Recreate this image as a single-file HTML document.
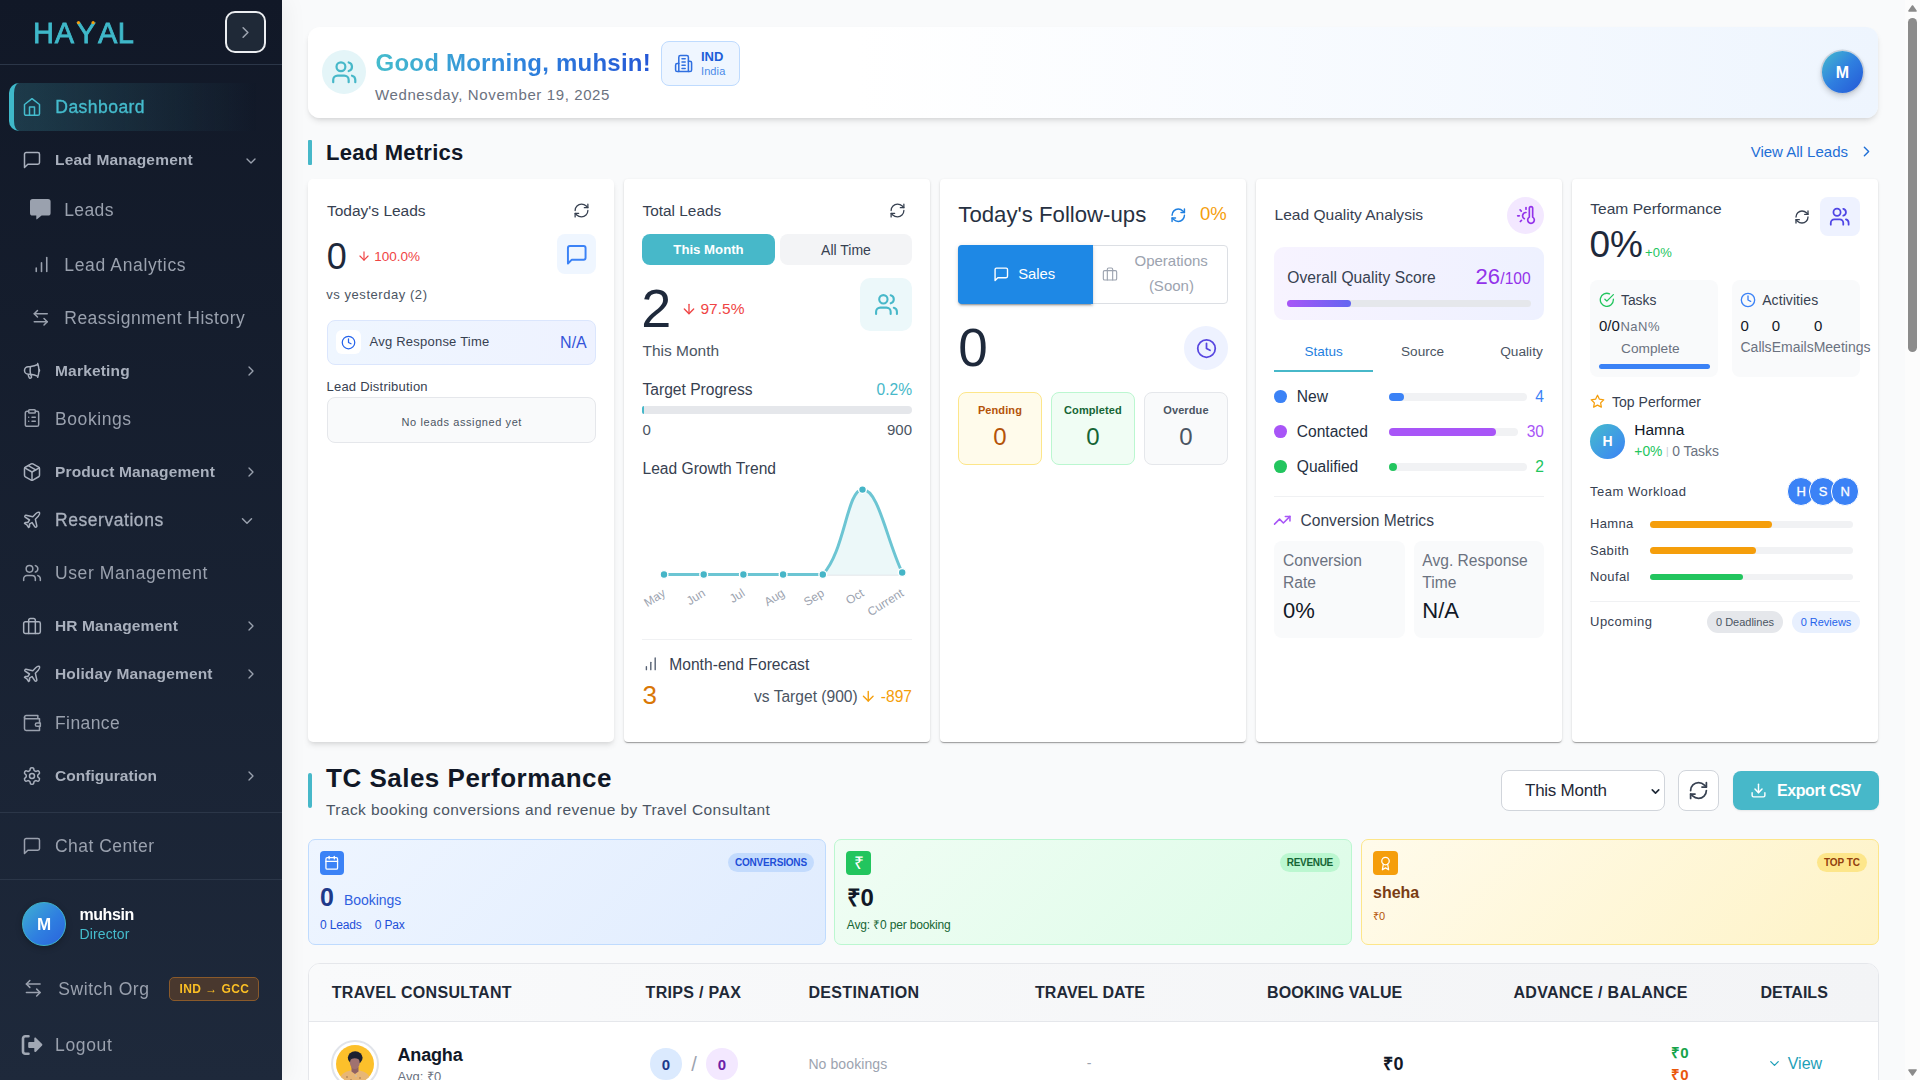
<!DOCTYPE html>
<html lang="en"><head><meta charset="utf-8"><title>Hayal Dashboard</title>
<style>
*{box-sizing:border-box;margin:0;padding:0}
button{border:0;background:none;font:inherit;cursor:pointer}
h1,h2{font-weight:700}
html,body{width:1920px;height:1080px;overflow:hidden;background:#f9fafb}
body{font-family:"Liberation Sans",sans-serif;-webkit-font-smoothing:antialiased}
#app{position:relative;width:1920px;height:1080px;overflow:hidden;background:#f9fafb}
.a{position:absolute;display:block}
.t{position:absolute;line-height:1;white-space:pre}
.card{position:absolute;background:#fff;border-radius:4px;box-shadow:0 2px 1px -1px rgba(0,0,0,.2),0 1px 1px 0 rgba(0,0,0,.14),0 1px 3px 0 rgba(0,0,0,.12)}
</style></head>
<body><div id="app">
<div class="a" style="left:0;top:0;width:282px;height:1080px;background:linear-gradient(180deg,#111827 0%,#1e293b 100%);box-shadow:4px 0 22px rgba(0,0,0,.055)"></div><aside class="a" style="left:0;top:0;width:282px;height:1080px;overflow:hidden;will-change:transform">
<div class="a" style="left:0px;top:0px;width:282px;height:65px;border-bottom:1px solid #2b3648"></div>
<svg class="a" style="left:30px;top:14px" width="110" height="36" viewBox="0 0 110 36"><text x="3.100 24.700 46.400 68 87.800" y="28.500" font-family="Liberation Sans, sans-serif" font-size="29" fill="#3fb8c9" stroke="#3fb8c9" stroke-width="0.800">HAYAL</text><circle cx="48.500" cy="8.600" r="1.600" fill="#f59e0b"/><circle cx="63.100" cy="8.600" r="1.600" fill="#f59e0b"/></svg>
<button class="a" style="left:225px;top:11px;width:41px;height:41.7px;border:2px solid #eceef1;border-radius:10px;background:#1f2937"></button>
<svg class="a" style="left:235.5px;top:22.5px;" width="19" height="19" viewBox="0 0 24 24" fill="none" stroke="#9ca3af" stroke-width="2" stroke-linecap="round" stroke-linejoin="round"><path d="m9 18 6-6-6-6"/></svg>
<div class="a" style="left:9px;top:83px;width:262px;height:48px;border-radius:10px;background:linear-gradient(90deg,rgba(71,184,201,.21),rgba(71,184,201,0) 95%);border-left:5px solid #3fb8c9"></div>
<svg class="a" style="left:21.5px;top:96.5px;" width="20" height="20" viewBox="0 0 24 24" fill="none" stroke="#45bccd" stroke-width="1.8" stroke-linecap="round" stroke-linejoin="round"><path d="m3 9 9-7 9 7v11a2 2 0 0 1-2 2H5a2 2 0 0 1-2-2z"/><polyline points="9 22 9 12 15 12 15 22"/></svg>
<div class="t" style="left:55.3px;top:99px;font-size:17.5px;color:#45bccd;font-weight:500;letter-spacing:0.46px;-webkit-text-stroke:0.35px #45bccd;">Dashboard</div>
<svg class="a" style="left:21.8px;top:150px;" width="20" height="20" viewBox="0 0 24 24" fill="none" stroke="#a9b0bd" stroke-width="1.8" stroke-linecap="round" stroke-linejoin="round"><path d="M21 15a2 2 0 0 1-2 2H7l-4 4V5a2 2 0 0 1 2-2h14a2 2 0 0 1 2 2z"/></svg>
<div class="t" style="left:55px;top:152px;font-size:15.5px;color:#a9b0bd;font-weight:700;letter-spacing:0.18px;">Lead Management</div>
<svg class="a" style="left:243px;top:152.5px;" width="16" height="16" viewBox="0 0 24 24" fill="none" stroke="#9aa1ae" stroke-width="2" stroke-linecap="round" stroke-linejoin="round"><path d="m6 9 6 6 6-6"/></svg>
<svg class="a" style="left:30.400px;top:199.200px" width="21" height="21" viewBox="0 0 21 21"><path d="M2.600 0h15.400a2.600 2.600 0 0 1 2.600 2.600v11.400a2.600 2.600 0 0 1-2.600 2.600h-6.400l-4.600 3.700c-.4.300-.7.100-.7-.3V16.600H2.600a2.600 2.600 0 0 1-2.600-2.600V2.600a2.600 2.600 0 0 1 2.600-2.600z" fill="#9aa1ae"/></svg>
<div class="t" style="left:64.25px;top:202px;font-size:17.5px;color:#9aa1ae;letter-spacing:0.37px;">Leads</div>
<svg class="a" style="left:30.5px;top:254px;" width="21" height="21" viewBox="0 0 24 24" fill="none" stroke="#9aa1ae" stroke-width="1.8" stroke-linecap="round" stroke-linejoin="round"><line x1="12" x2="12" y1="20" y2="10"/><line x1="18" x2="18" y1="20" y2="4"/><line x1="6" x2="6" y1="20" y2="16"/></svg>
<div class="t" style="left:64.25px;top:257px;font-size:17.5px;color:#9aa1ae;letter-spacing:0.65px;">Lead Analytics</div>
<svg class="a" style="left:31.25px;top:307.75px;" width="19.5" height="19.5" viewBox="0 0 24 24" fill="none" stroke="#9aa1ae" stroke-width="1.8" stroke-linecap="round" stroke-linejoin="round"><path d="M8 3 4 7l4 4"/><path d="M4 7h16"/><path d="m16 21 4-4-4-4"/><path d="M20 17H4"/></svg>
<div class="t" style="left:64.25px;top:310px;font-size:17.5px;color:#9aa1ae;letter-spacing:0.49px;">Reassignment History</div>
<svg class="a" style="left:21.8px;top:361px;" width="20" height="20" viewBox="0 0 24 24" fill="none" stroke="#a9b0bd" stroke-width="1.8" stroke-linecap="round" stroke-linejoin="round"><path d="M10.34 15.84c-.688-.06-1.386-.09-2.09-.09H7.5a4.5 4.5 0 1 1 0-9h.75c.704 0 1.402-.03 2.09-.09m0 9.18c.253.962.584 1.892.985 2.783.247.55.06 1.21-.463 1.511l-.657.38c-.551.318-1.26.117-1.527-.461a20.845 20.845 0 0 1-1.44-4.282m3.102.069a18.03 18.03 0 0 1-.59-4.59c0-1.586.205-3.124.59-4.59m0 9.18a23.848 23.848 0 0 1 8.835 2.535M10.34 6.66a23.847 23.847 0 0 0 8.835-2.535m0 0A23.74 23.74 0 0 0 18.795 3m.38 1.125a23.91 23.91 0 0 1 1.014 5.395m-1.014 8.855c-.118.38-.245.754-.38 1.125m.38-1.125a23.91 23.91 0 0 0 1.014-5.395m0-3.46c.495.413.811 1.035.811 1.73 0 .695-.316 1.317-.811 1.73m0-3.46a24.347 24.347 0 0 1 0 3.46"/></svg>
<div class="t" style="left:55px;top:363px;font-size:15.5px;color:#a9b0bd;font-weight:700;letter-spacing:0.19px;">Marketing</div>
<svg class="a" style="left:242.6px;top:363px;" width="16" height="16" viewBox="0 0 24 24" fill="none" stroke="#9aa1ae" stroke-width="2" stroke-linecap="round" stroke-linejoin="round"><path d="m9 18 6-6-6-6"/></svg>
<svg class="a" style="left:21.8px;top:408.2px;" width="20" height="20" viewBox="0 0 24 24" fill="none" stroke="#9aa1ae" stroke-width="1.8" stroke-linecap="round" stroke-linejoin="round"><rect width="8" height="4" x="8" y="2" rx="1" ry="1"/><path d="M16 4h2a2 2 0 0 1 2 2v14a2 2 0 0 1-2 2H6a2 2 0 0 1-2-2V6a2 2 0 0 1 2-2h2"/><path d="M12 11h4"/><path d="M12 16h4"/><path d="M8 11h.01"/><path d="M8 16h.01"/></svg>
<div class="t" style="left:55px;top:411px;font-size:17.5px;color:#9aa1ae;letter-spacing:0.59px;">Bookings</div>
<svg class="a" style="left:21.8px;top:461.6px;" width="20" height="20" viewBox="0 0 24 24" fill="none" stroke="#a9b0bd" stroke-width="1.8" stroke-linecap="round" stroke-linejoin="round"><path d="m7.5 4.27 9 5.15"/><path d="M21 8a2 2 0 0 0-1-1.73l-7-4a2 2 0 0 0-2 0l-7 4A2 2 0 0 0 3 8v8a2 2 0 0 0 1 1.73l7 4a2 2 0 0 0 2 0l7-4A2 2 0 0 0 21 16Z"/><path d="m3.3 7 8.7 5 8.7-5"/><path d="M12 22V12"/></svg>
<div class="t" style="left:55px;top:464px;font-size:15.5px;color:#a9b0bd;font-weight:700;letter-spacing:0.13px;">Product Management</div>
<svg class="a" style="left:242.6px;top:463.6px;" width="16" height="16" viewBox="0 0 24 24" fill="none" stroke="#9aa1ae" stroke-width="2" stroke-linecap="round" stroke-linejoin="round"><path d="m9 18 6-6-6-6"/></svg>
<svg class="a" style="left:21.8px;top:510px;" width="20" height="20" viewBox="0 0 24 24" fill="none" stroke="#a9b0bd" stroke-width="1.8" stroke-linecap="round" stroke-linejoin="round"><path d="M17.8 19.2 16 11l3.5-3.5C21 6 21.5 4 21 3c-1-.5-3 0-4.5 1.5L13 8 4.8 6.2c-.5-.1-.9.1-1.1.5l-.3.5c-.2.5-.1 1 .3 1.3L9 12l-2 3H4l-1 1 3 2 2 3 1-1v-3l3-2 3.5 5.3c.3.4.8.5 1.3.3l.5-.2c.4-.3.6-.7.5-1.2z"/></svg>
<div class="t" style="left:55px;top:512px;font-size:17.5px;color:#a9b0bd;font-weight:500;letter-spacing:0.55px;-webkit-text-stroke:0.3px #a9b0bd;">Reservations</div>
<svg class="a" style="left:237.5px;top:511.5px;" width="18" height="18" viewBox="0 0 24 24" fill="none" stroke="#9aa1ae" stroke-width="2" stroke-linecap="round" stroke-linejoin="round"><path d="m6 9 6 6 6-6"/></svg>
<svg class="a" style="left:21.8px;top:562.5px;" width="20" height="20" viewBox="0 0 24 24" fill="none" stroke="#9aa1ae" stroke-width="1.8" stroke-linecap="round" stroke-linejoin="round"><path d="M16 21v-2a4 4 0 0 0-4-4H6a4 4 0 0 0-4 4v2"/><circle cx="9" cy="7" r="4"/><path d="M22 21v-2a4 4 0 0 0-3-3.87"/><path d="M16 3.13a4 4 0 0 1 0 7.75"/></svg>
<div class="t" style="left:55px;top:565px;font-size:17.5px;color:#9aa1ae;letter-spacing:0.6px;">User Management</div>
<svg class="a" style="left:21.8px;top:615.5px;" width="20" height="20" viewBox="0 0 24 24" fill="none" stroke="#a9b0bd" stroke-width="1.8" stroke-linecap="round" stroke-linejoin="round"><rect width="20" height="14" x="2" y="7" rx="2" ry="2"/><path d="M16 21V5a2 2 0 0 0-2-2h-4a2 2 0 0 0-2 2v16"/></svg>
<div class="t" style="left:55px;top:618px;font-size:15.5px;color:#a9b0bd;font-weight:700;letter-spacing:0.12px;">HR Management</div>
<svg class="a" style="left:242.6px;top:617.5px;" width="16" height="16" viewBox="0 0 24 24" fill="none" stroke="#9aa1ae" stroke-width="2" stroke-linecap="round" stroke-linejoin="round"><path d="m9 18 6-6-6-6"/></svg>
<svg class="a" style="left:21.8px;top:663.5px;" width="20" height="20" viewBox="0 0 24 24" fill="none" stroke="#a9b0bd" stroke-width="1.8" stroke-linecap="round" stroke-linejoin="round"><path d="M17.8 19.2 16 11l3.5-3.5C21 6 21.5 4 21 3c-1-.5-3 0-4.5 1.5L13 8 4.8 6.2c-.5-.1-.9.1-1.1.5l-.3.5c-.2.5-.1 1 .3 1.3L9 12l-2 3H4l-1 1 3 2 2 3 1-1v-3l3-2 3.5 5.3c.3.4.8.5 1.3.3l.5-.2c.4-.3.6-.7.5-1.2z"/></svg>
<div class="t" style="left:55px;top:666px;font-size:15.5px;color:#a9b0bd;font-weight:700;letter-spacing:0.14px;">Holiday Management</div>
<svg class="a" style="left:242.6px;top:665.5px;" width="16" height="16" viewBox="0 0 24 24" fill="none" stroke="#9aa1ae" stroke-width="2" stroke-linecap="round" stroke-linejoin="round"><path d="m9 18 6-6-6-6"/></svg>
<svg class="a" style="left:21.8px;top:712.5px;" width="20" height="20" viewBox="0 0 24 24" fill="none" stroke="#9aa1ae" stroke-width="1.8" stroke-linecap="round" stroke-linejoin="round"><path d="M21 12V7H5a2 2 0 0 1 0-4h14v4"/><path d="M3 5v14a2 2 0 0 0 2 2h16v-5"/><path d="M18 12a2 2 0 0 0 0 4h4v-4Z"/></svg>
<div class="t" style="left:55px;top:715px;font-size:17.5px;color:#9aa1ae;letter-spacing:0.4px;">Finance</div>
<svg class="a" style="left:21.8px;top:765.5px;" width="20" height="20" viewBox="0 0 24 24" fill="none" stroke="#a9b0bd" stroke-width="1.8" stroke-linecap="round" stroke-linejoin="round"><path d="M12.22 2h-.44a2 2 0 0 0-2 2v.18a2 2 0 0 1-1 1.73l-.43.25a2 2 0 0 1-2 0l-.15-.08a2 2 0 0 0-2.73.73l-.22.38a2 2 0 0 0 .73 2.73l.15.1a2 2 0 0 1 1 1.72v.51a2 2 0 0 1-1 1.74l-.15.09a2 2 0 0 0-.73 2.73l.22.38a2 2 0 0 0 2.73.73l.15-.08a2 2 0 0 1 2 0l.43.25a2 2 0 0 1 1 1.73V20a2 2 0 0 0 2 2h.44a2 2 0 0 0 2-2v-.18a2 2 0 0 1 1-1.73l.43-.25a2 2 0 0 1 2 0l.15.08a2 2 0 0 0 2.73-.73l.22-.39a2 2 0 0 0-.73-2.73l-.15-.08a2 2 0 0 1-1-1.74v-.5a2 2 0 0 1 1-1.74l.15-.09a2 2 0 0 0 .73-2.73l-.22-.38a2 2 0 0 0-2.73-.73l-.15.08a2 2 0 0 1-2 0l-.43-.25a2 2 0 0 1-1-1.73V4a2 2 0 0 0-2-2z"/><circle cx="12" cy="12" r="3"/></svg>
<div class="t" style="left:55px;top:768px;font-size:15.5px;color:#a9b0bd;font-weight:700;letter-spacing:0.03px;">Configuration</div>
<svg class="a" style="left:242.6px;top:767.5px;" width="16" height="16" viewBox="0 0 24 24" fill="none" stroke="#9aa1ae" stroke-width="2" stroke-linecap="round" stroke-linejoin="round"><path d="m9 18 6-6-6-6"/></svg>
<div class="a" style="left:0px;top:812px;width:282px;height:1px;background:#2b3648"></div>
<svg class="a" style="left:21.8px;top:835.7px;" width="20" height="20" viewBox="0 0 24 24" fill="none" stroke="#9aa1ae" stroke-width="1.8" stroke-linecap="round" stroke-linejoin="round"><path d="M21 15a2 2 0 0 1-2 2H7l-4 4V5a2 2 0 0 1 2-2h14a2 2 0 0 1 2 2z"/></svg>
<div class="t" style="left:55px;top:838px;font-size:17.5px;color:#9aa1ae;letter-spacing:0.46px;">Chat Center</div>
<div class="a" style="left:0px;top:879px;width:282px;height:1px;background:#2b3648"></div>
<div class="a" style="left:22px;top:902px;width:44px;height:44px;border-radius:50%;background:linear-gradient(135deg,#3fb0d2 0%,#2f7fe0 55%,#2a63dc 100%);border:1.500px solid #41b3c9;box-shadow:0 2px 6px rgba(0,0,0,.25)"></div>
<div class="t" style="left:44px;top:916px;font-size:17px;color:#fff;font-weight:700;transform:translateX(-50%);">M</div>
<div class="t" style="left:79.5px;top:907px;font-size:16px;color:#fff;font-weight:700;letter-spacing:-0.44px;">muhsin</div>
<div class="t" style="left:79.5px;top:927px;font-size:14px;color:#45bccd;letter-spacing:0.12px;">Director</div>
<svg class="a" style="left:23.45px;top:978.45px;" width="20.5" height="20.5" viewBox="0 0 24 24" fill="none" stroke="#9aa1ae" stroke-width="1.8" stroke-linecap="round" stroke-linejoin="round"><path d="M8 3 4 7l4 4"/><path d="M4 7h16"/><path d="m16 21 4-4-4-4"/><path d="M20 17H4"/></svg>
<div class="t" style="left:58.25px;top:981px;font-size:17.5px;color:#9aa1ae;letter-spacing:0.57px;">Switch Org</div>
<div class="a" style="left:168.75px;top:977px;width:90.5px;height:24px;border:1px solid #8a5a2b;border-radius:5px;background:#49382e"></div>
<div class="t" style="left:214.42px;top:983px;font-size:12px;color:#fbbf24;font-weight:700;letter-spacing:0.44px;transform:translateX(-50%);">IND → GCC</div>
<svg class="a" style="left:21px;top:1033.500px" width="22" height="22" viewBox="0 0 22 22"><path d="M7.500 2.200H4.300A2.300 2.300 0 0 0 2 4.500v13a2.300 2.300 0 0 0 2.300 2.300h3.200" fill="none" stroke="#a1a8b4" stroke-width="2.600" stroke-linecap="round"/><path d="M13.300 4.600c0-.9 1.050-1.350 1.700-.700l6.100 6.200c.4.400.4 1.050 0 1.450L15 17.750c-.65.650-1.700.2-1.700-.700V14H8.200a1 1 0 0 1-1-1V9a1 1 0 0 1 1-1h5.100z" fill="#a1a8b4"/></svg>
<div class="t" style="left:55px;top:1037px;font-size:17.5px;color:#9aa1ae;letter-spacing:0.65px;">Logout</div>
</aside>
<main class="a" style="left:282px;top:0;width:1638px;height:1080px">
<header class="a" style="left:26px;top:27px;width:1570px;height:91px;border-radius:12px;background:linear-gradient(90deg,#fff 0%,#fff 35%,#eef5fe 100%);box-shadow:0 4px 6px -1px rgba(0,0,0,.1),0 2px 4px -2px rgba(0,0,0,.1)"><div class="a" style="left:14px;top:23px;width:44px;height:44px;border-radius:50%;background:#e4f5f8"></div><svg class="a" style="left:22.75px;top:31.75px;" width="26.5" height="26.5" viewBox="0 0 24 24" fill="none" stroke="#47b8c9" stroke-width="2" stroke-linecap="round" stroke-linejoin="round"><path d="M16 21v-2a4 4 0 0 0-4-4H6a4 4 0 0 0-4 4v2"/><circle cx="9" cy="7" r="4"/><path d="M22 21v-2a4 4 0 0 0-3-3.87"/><path d="M16 3.13a4 4 0 0 1 0 7.75"/></svg><h1 class="t" style="left:67.5px;top:24px;font-size:24px;color:#2f7fe0;font-weight:700;letter-spacing:0.23px;background:linear-gradient(90deg,#45bccd 0%,#2f86dd 50%,#2557d6 100%);-webkit-background-clip:text;background-clip:text;-webkit-text-fill-color:transparent;color:transparent;padding-bottom:6px">Good Morning, muhsin!</h1><div class="t" style="left:67px;top:60px;font-size:15px;color:#6b7280;letter-spacing:0.61px;">Wednesday, November 19, 2025</div><div class="a" style="left:353px;top:14px;width:78.5px;height:44.5px;border:1px solid #bfdbfe;border-radius:8px;background:#eff6ff"></div><svg class="a" style="left:366.1px;top:27.2px;" width="19.2" height="19.2" viewBox="0 0 24 24" fill="none" stroke="#2f6fe0" stroke-width="1.9" stroke-linecap="round" stroke-linejoin="round"><path d="M6 22V4a2 2 0 0 1 2-2h8a2 2 0 0 1 2 2v18Z"/><path d="M6 12H4a2 2 0 0 0-2 2v6a2 2 0 0 0 2 2h2"/><path d="M18 9h2a2 2 0 0 1 2 2v9a2 2 0 0 1-2 2h-2"/><path d="M10 6h4"/><path d="M10 10h4"/><path d="M10 14h4"/><path d="M10 18h4"/></svg><div class="t" style="left:393px;top:23px;font-size:13px;color:#1d5fd8;font-weight:700;">IND</div><div class="t" style="left:393px;top:39px;font-size:11px;color:#4a8ae8;letter-spacing:0.1px;">India</div><div class="a" style="left:1513.5px;top:24px;width:41.5px;height:41.5px;border-radius:50%;background:linear-gradient(135deg,#45bccd 0%,#2f7fe0 50%,#2557d6 100%);box-shadow:0 0 0 1.500px rgba(190,198,210,.7),0 3px 6px rgba(0,0,0,.2)"></div><div class="t" style="left:1534.3px;top:38px;font-size:16px;color:#fff;font-weight:700;transform:translateX(-50%);">M</div></header>
<div class="a" style="left:26px;top:139.5px;width:4px;height:25px;background:#47b8c9;border-radius:1px"></div>
<h2 class="t" style="left:44px;top:142px;font-size:22px;color:#111827;font-weight:700;letter-spacing:0.25px;">Lead Metrics</h2>
<div class="t" style="left:1468.7px;top:144px;font-size:15px;color:#1f6fd6;">View All Leads</div>
<svg class="a" style="left:1576.25px;top:143.25px;" width="17" height="17" viewBox="0 0 24 24" fill="none" stroke="#1f6fd6" stroke-width="2" stroke-linecap="round" stroke-linejoin="round"><path d="m9 18 6-6-6-6"/></svg>
<section class="card" style="left:26px;top:179px;width:306px;height:563px;box-shadow:0 4px 6px -1px rgba(0,0,0,.1),0 2px 4px -2px rgba(0,0,0,.1);border-radius:5px"><div class="t" style="left:19px;top:24px;font-size:15.5px;color:#374151;">Today's Leads</div><svg class="a" style="left:265.1px;top:23.1px;" width="17" height="17" viewBox="0 0 24 24" fill="none" stroke="#374151" stroke-width="1.8" stroke-linecap="round" stroke-linejoin="round"><path d="M3 12a9 9 0 0 1 9-9 9.75 9.75 0 0 1 6.74 2.74L21 8"/><path d="M21 3v5h-5"/><path d="M21 12a9 9 0 0 1-9 9 9.75 9.75 0 0 1-6.74-2.74L3 16"/><path d="M8 16H3v5"/></svg><div class="t" style="left:18.7px;top:60px;font-size:36px;color:#1e293b;">0</div><svg class="a" style="left:48.75px;top:70.3px;" width="14" height="14" viewBox="0 0 24 24" fill="none" stroke="#ef4444" stroke-width="2" stroke-linecap="round" stroke-linejoin="round"><path d="M12 5v14"/><path d="m19 12-7 7-7-7"/></svg><div class="t" style="left:66.25px;top:71px;font-size:13.5px;color:#ef4444;">100.0%</div><div class="a" style="left:249px;top:55px;width:38.5px;height:39.75px;background:#eff6ff;border-radius:8px"></div><svg class="a" style="left:257.25px;top:63.65px;" width="23.5" height="23.5" viewBox="0 0 24 24" fill="none" stroke="#3b82f6" stroke-width="2" stroke-linecap="round" stroke-linejoin="round"><path d="M21 15a2 2 0 0 1-2 2H7l-4 4V5a2 2 0 0 1 2-2h14a2 2 0 0 1 2 2z"/></svg><div class="t" style="left:18.25px;top:109px;font-size:13px;color:#4b5563;letter-spacing:0.55px;">vs yesterday (2)</div><div class="a" style="left:19px;top:141px;width:268.75px;height:44.5px;background:linear-gradient(90deg,#eff6ff,#eef2ff);border:1px solid #dbe6fd;border-radius:8px"></div><div class="a" style="left:27.75px;top:151px;width:25px;height:24px;background:#fff;border-radius:6px"></div><svg class="a" style="left:33.1px;top:155.5px;" width="15" height="15" viewBox="0 0 24 24" fill="none" stroke="#2563eb" stroke-width="2" stroke-linecap="round" stroke-linejoin="round"><circle cx="12" cy="12" r="10"/><polyline points="12 6 12 12 16 14"/></svg><div class="t" style="left:61.5px;top:156px;font-size:13px;color:#374151;letter-spacing:0.23px;">Avg Response Time</div><div class="t" style="left:278.75px;top:156px;font-size:16px;color:#3454d9;transform:translateX(-100%);">N/A</div><div class="t" style="left:18.5px;top:201px;font-size:13px;color:#374151;letter-spacing:0.22px;">Lead Distribution</div><div class="a" style="left:19px;top:218px;width:268.75px;height:45.5px;background:#f9fafb;border:1px solid #e5e7eb;border-radius:8px"></div><div class="t" style="left:153.79px;top:238px;font-size:11px;color:#4b5563;letter-spacing:0.58px;transform:translateX(-50%);">No leads assigned yet</div></section>
<section class="card" style="left:342px;top:179px;width:306px;height:563px"><div class="t" style="left:18.5px;top:24px;font-size:15.4px;color:#374151;">Total Leads</div><svg class="a" style="left:265.1px;top:23.1px;" width="17" height="17" viewBox="0 0 24 24" fill="none" stroke="#374151" stroke-width="1.8" stroke-linecap="round" stroke-linejoin="round"><path d="M3 12a9 9 0 0 1 9-9 9.75 9.75 0 0 1 6.74 2.74L21 8"/><path d="M21 3v5h-5"/><path d="M21 12a9 9 0 0 1-9 9 9.75 9.75 0 0 1-6.74-2.74L3 16"/><path d="M8 16H3v5"/></svg><div class="a" style="left:18px;top:55.25px;width:133px;height:30.75px;background:#47b8c9;border-radius:8px"></div><div class="t" style="left:84.5px;top:64px;font-size:13.2px;color:#fff;font-weight:700;transform:translateX(-50%);">This Month</div><div class="a" style="left:156px;top:55.25px;width:132px;height:30.75px;background:#f3f4f6;border-radius:8px"></div><div class="t" style="left:222px;top:64px;font-size:14px;color:#374151;transform:translateX(-50%);">All Time</div><div class="t" style="left:17.2px;top:102px;font-size:54px;color:#1e293b;">2</div><svg class="a" style="left:57.4px;top:121.75px;" width="16" height="16" viewBox="0 0 24 24" fill="none" stroke="#ef4444" stroke-width="2" stroke-linecap="round" stroke-linejoin="round"><path d="M12 5v14"/><path d="m19 12-7 7-7-7"/></svg><div class="t" style="left:76.5px;top:122px;font-size:15.5px;color:#ef4444;">97.5%</div><div class="a" style="left:236px;top:99px;width:52px;height:52.75px;background:#ecf8fa;border-radius:10px"></div><svg class="a" style="left:249.5px;top:112.8px;" width="25" height="25" viewBox="0 0 24 24" fill="none" stroke="#47b8c9" stroke-width="2" stroke-linecap="round" stroke-linejoin="round"><path d="M16 21v-2a4 4 0 0 0-4-4H6a4 4 0 0 0-4 4v2"/><circle cx="9" cy="7" r="4"/><path d="M22 21v-2a4 4 0 0 0-3-3.87"/><path d="M16 3.13a4 4 0 0 1 0 7.75"/></svg><div class="t" style="left:18.5px;top:164px;font-size:15.5px;color:#4b5563;">This Month</div><div class="t" style="left:18.5px;top:203px;font-size:15.6px;color:#374151;">Target Progress</div><div class="t" style="left:288px;top:203px;font-size:15.6px;color:#47b8c9;transform:translateX(-100%);">0.2%</div><div class="a" style="left:18px;top:227.25px;width:270px;height:7.5px;background:#e5e7eb;border-radius:4px"><div class="a" style="left:0;top:0;width:1.5px;height:7.5px;background:#47b8c9;border-radius:4px 0 0 4px"></div></div><div class="t" style="left:18.5px;top:243px;font-size:15px;color:#4b5563;">0</div><div class="t" style="left:288px;top:243px;font-size:15px;color:#4b5563;transform:translateX(-100%);">900</div><div class="t" style="left:18.5px;top:282px;font-size:15.6px;color:#374151;">Lead Growth Trend</div><svg class="a" style="left:0;top:0" width="306" height="563" viewBox="0 0 306 563"><path d="M40.0,395.5 L198.8,395.5 C221.2,371.6 222.7,311.0 238.5,310.6 C254.4,310.2 262.4,360.3 278.2,393.5 L278.2,396.0 L40.0,396.0 Z" fill="rgba(71,184,201,.1)"/><path d="M40.0,396.2 L278.2,396.2" stroke="#e3e6ea" stroke-width="1" fill="none"/><path d="M40.0,395.5 L198.8,395.5 C221.2,371.6 222.7,311.0 238.5,310.6 C254.4,310.2 262.4,360.3 278.2,393.5" fill="none" stroke="#6cc5d3" stroke-width="3" stroke-linecap="round" stroke-linejoin="round"/><circle cx="40.0" cy="395.5" r="3.900" fill="#45b5c7" stroke="#fff" stroke-width="1.400"/><circle cx="79.7" cy="395.5" r="3.900" fill="#45b5c7" stroke="#fff" stroke-width="1.400"/><circle cx="119.4" cy="395.5" r="3.900" fill="#45b5c7" stroke="#fff" stroke-width="1.400"/><circle cx="159.1" cy="395.5" r="3.900" fill="#45b5c7" stroke="#fff" stroke-width="1.400"/><circle cx="198.8" cy="395.5" r="3.900" fill="#45b5c7" stroke="#fff" stroke-width="1.400"/><circle cx="238.5" cy="310.6" r="3.900" fill="#45b5c7" stroke="#fff" stroke-width="1.400"/><circle cx="278.2" cy="393.5" r="3.900" fill="#45b5c7" stroke="#fff" stroke-width="1.400"/><text x="42.4" y="416.2" text-anchor="end" transform="rotate(-32 42.4 416.2)" font-family="Liberation Sans, sans-serif" font-size="12" fill="#9ca3af">May</text><text x="82.1" y="416.2" text-anchor="end" transform="rotate(-32 82.1 416.2)" font-family="Liberation Sans, sans-serif" font-size="12" fill="#9ca3af">Jun</text><text x="121.8" y="416.2" text-anchor="end" transform="rotate(-32 121.8 416.2)" font-family="Liberation Sans, sans-serif" font-size="12" fill="#9ca3af">Jul</text><text x="161.5" y="416.2" text-anchor="end" transform="rotate(-32 161.5 416.2)" font-family="Liberation Sans, sans-serif" font-size="12" fill="#9ca3af">Aug</text><text x="201.2" y="416.2" text-anchor="end" transform="rotate(-32 201.2 416.2)" font-family="Liberation Sans, sans-serif" font-size="12" fill="#9ca3af">Sep</text><text x="240.9" y="416.2" text-anchor="end" transform="rotate(-32 240.9 416.2)" font-family="Liberation Sans, sans-serif" font-size="12" fill="#9ca3af">Oct</text><text x="280.6" y="416.2" text-anchor="end" transform="rotate(-32 280.6 416.2)" font-family="Liberation Sans, sans-serif" font-size="12" fill="#9ca3af">Current</text></svg><div class="a" style="left:18px;top:460px;width:270px;height:1px;background:#f0f1f3"></div><svg class="a" style="left:18.2px;top:475.9px;" width="17.6" height="17.6" viewBox="0 0 24 24" fill="none" stroke="#566173" stroke-width="1.9" stroke-linecap="round" stroke-linejoin="round"><line x1="12" x2="12" y1="20" y2="10"/><line x1="18" x2="18" y1="20" y2="4"/><line x1="6" x2="6" y1="20" y2="16"/></svg><div class="t" style="left:45.2px;top:478px;font-size:15.6px;color:#374151;letter-spacing:0.03px;">Month-end Forecast</div><div class="t" style="left:18.6px;top:503px;font-size:26px;color:#d97706;">3</div><div class="t" style="left:130px;top:510px;font-size:15.6px;color:#4b5563;">vs Target (900)</div><svg class="a" style="left:235.75px;top:509.05px;" width="16.5" height="16.5" viewBox="0 0 24 24" fill="none" stroke="#f59e0b" stroke-width="2" stroke-linecap="round" stroke-linejoin="round"><path d="M12 5v14"/><path d="m19 12-7 7-7-7"/></svg><div class="t" style="left:288px;top:510px;font-size:15.6px;color:#f59e0b;transform:translateX(-100%);">-897</div></section>
<section class="card" style="left:658px;top:179px;width:306px;height:563px"><div class="t" style="left:18.3px;top:25px;font-size:22.2px;color:#273142;">Today's Follow-ups</div><svg class="a" style="left:229.55px;top:27.55px;" width="16.5" height="16.5" viewBox="0 0 24 24" fill="none" stroke="#1e7fe0" stroke-width="2.1" stroke-linecap="round" stroke-linejoin="round"><path d="M3 12a9 9 0 0 1 9-9 9.75 9.75 0 0 1 6.74 2.74L21 8"/><path d="M21 3v5h-5"/><path d="M21 12a9 9 0 0 1-9 9 9.75 9.75 0 0 1-6.74-2.74L3 16"/><path d="M8 16H3v5"/></svg><div class="t" style="left:260px;top:26px;font-size:18.5px;color:#f59e0b;">0%</div><div class="a" style="left:18px;top:66px;width:269.5px;height:58.75px;border:1px solid #dcdfe4;border-radius:4px;background:#fff"></div><div class="a" style="left:18px;top:66px;width:135px;height:58.75px;background:#1e88e5;border-radius:4px 0 0 4px;box-shadow:0 3px 1px -2px rgba(0,0,0,.2),0 2px 2px 0 rgba(0,0,0,.14),0 1px 5px 0 rgba(0,0,0,.12)"></div><svg class="a" style="left:53.2px;top:87.3px;" width="16.6" height="16.6" viewBox="0 0 24 24" fill="none" stroke="#fff" stroke-width="2" stroke-linecap="round" stroke-linejoin="round"><path d="M21 15a2 2 0 0 1-2 2H7l-4 4V5a2 2 0 0 1 2-2h14a2 2 0 0 1 2 2z"/></svg><div class="t" style="left:78.2px;top:88px;font-size:14.8px;color:#fff;">Sales</div><svg class="a" style="left:161.8px;top:87.2px;" width="16" height="16" viewBox="0 0 24 24" fill="none" stroke="#9ca3af" stroke-width="1.7" stroke-linecap="round" stroke-linejoin="round"><rect width="20" height="14" x="2" y="7" rx="2" ry="2"/><path d="M16 21V5a2 2 0 0 0-2-2h-4a2 2 0 0 0-2 2v16"/></svg><div class="t" style="left:231.2px;top:74px;font-size:15px;color:#9ca3af;transform:translateX(-50%);">Operations</div><div class="t" style="left:231.4px;top:99px;font-size:15px;color:#9ca3af;transform:translateX(-50%);">(Soon)</div><div class="t" style="left:18.3px;top:142px;font-size:53px;color:#1e293b;">0</div><div class="a" style="left:244.25px;top:147.25px;width:43.75px;height:43.75px;background:#eef2ff;border-radius:50%"></div><svg class="a" style="left:255.6px;top:158.6px;" width="21" height="21" viewBox="0 0 24 24" fill="none" stroke="#5746e0" stroke-width="2" stroke-linecap="round" stroke-linejoin="round"><circle cx="12" cy="12" r="10"/><polyline points="12 6 12 12 16 14"/></svg><div class="a" style="left:18px;top:213.2px;width:83.8px;height:72.6px;background:#fffbeb;border:1px solid #fde68a;border-radius:8px"></div><div class="t" style="left:59.95px;top:226px;font-size:11px;color:#b45309;font-weight:700;letter-spacing:0.1px;transform:translateX(-50%);">Pending</div><div class="t" style="left:59.9px;top:246px;font-size:24px;color:#b45309;transform:translateX(-50%);">0</div><div class="a" style="left:111px;top:213.2px;width:83.7px;height:72.6px;background:#f0fdf4;border:1px solid #bbf7d0;border-radius:8px"></div><div class="t" style="left:152.9px;top:226px;font-size:11px;color:#166534;font-weight:700;letter-spacing:0.1px;transform:translateX(-50%);">Completed</div><div class="t" style="left:152.85px;top:246px;font-size:24px;color:#166534;transform:translateX(-50%);">0</div><div class="a" style="left:204px;top:213.2px;width:83.8px;height:72.6px;background:#f9fafb;border:1px solid #e5e7eb;border-radius:8px"></div><div class="t" style="left:245.95px;top:226px;font-size:11px;color:#4b5563;font-weight:700;letter-spacing:0.1px;transform:translateX(-50%);">Overdue</div><div class="t" style="left:245.9px;top:246px;font-size:24px;color:#4b5563;transform:translateX(-50%);">0</div></section>
<section class="card" style="left:974px;top:179px;width:306px;height:563px"><div class="t" style="left:18.5px;top:28px;font-size:15.55px;color:#374151;">Lead Quality Analysis</div><div class="a" style="left:251px;top:18px;width:37px;height:37px;background:#f3e8ff;border-radius:50%"></div><svg class="a" style="left:260px;top:26px;" width="20" height="20" viewBox="0 0 24 24" fill="none" stroke="#9333ea" stroke-width="2" stroke-linecap="round" stroke-linejoin="round"><path d="M12 9a4 4 0 0 0-2 7.5"/><path d="M12 3v2"/><path d="m6.6 18.4-1.4 1.4"/><path d="M20 4v10.54a4 4 0 1 1-4 0V4a2 2 0 0 1 4 0Z"/><path d="M4 13H2"/><path d="M6.34 7.34 4.93 5.93"/></svg><div class="a" style="left:18px;top:68.3px;width:270px;height:72.7px;background:linear-gradient(90deg,#f7f3ff,#eef1ff);border-radius:10px"></div><div class="t" style="left:31.3px;top:91px;font-size:15.6px;color:#374151;letter-spacing:0.05px;">Overall Quality Score</div><div class="t" style="left:219.5px;top:87px;font-size:22px;color:#9333ea;">26</div><div class="t" style="left:244.3px;top:92px;font-size:15.6px;color:#9333ea;">/100</div><div class="a" style="left:31px;top:121px;width:244px;height:6.8px;background:#e5e7eb;border-radius:4px"><div class="a" style="left:0;top:0;width:63.5px;height:6.8px;border-radius:4px;background:linear-gradient(90deg,#a855f7,#6366f1)"></div></div><div class="t" style="left:67.6px;top:166px;font-size:13.5px;color:#1e7fe0;transform:translateX(-50%);">Status</div><div class="t" style="left:166.6px;top:166px;font-size:13.6px;color:#4b5563;transform:translateX(-50%);">Source</div><div class="t" style="left:265.5px;top:166px;font-size:13.7px;color:#4b5563;transform:translateX(-50%);">Quality</div><div class="a" style="left:18px;top:190.7px;width:99px;height:2.3px;background:#47b8c9"></div><div class="a" style="left:18.2px;top:211.35px;width:12.8px;height:12.8px;background:#3b82f6;border-radius:50%"></div><div class="t" style="left:40.75px;top:210px;font-size:15.6px;color:#263042;">New</div><div class="a" style="left:133px;top:213.75px;width:137.7px;height:8px;background:#f1f2f4;border-radius:4px"><div class="a" style="left:0;top:0;width:15.3px;height:8px;border-radius:4px;background:#3b82f6"></div></div><div class="t" style="left:288px;top:210px;font-size:15.6px;color:#3b82f6;transform:translateX(-100%);">4</div><div class="a" style="left:18.2px;top:246.1px;width:12.8px;height:12.8px;background:#a855f7;border-radius:50%"></div><div class="t" style="left:40.75px;top:245px;font-size:15.6px;color:#263042;">Contacted</div><div class="a" style="left:133px;top:248.5px;width:128.6px;height:8px;background:#f1f2f4;border-radius:4px"><div class="a" style="left:0;top:0;width:107.1px;height:8px;border-radius:4px;background:#a855f7"></div></div><div class="t" style="left:288px;top:245px;font-size:15.6px;color:#a855f7;transform:translateX(-100%);">30</div><div class="a" style="left:18.2px;top:281px;width:12.8px;height:12.8px;background:#22c55e;border-radius:50%"></div><div class="t" style="left:40.75px;top:280px;font-size:15.6px;color:#263042;">Qualified</div><div class="a" style="left:133px;top:284.2px;width:137.7px;height:8px;background:#f1f2f4;border-radius:4px"><div class="a" style="left:0;top:0;width:7.5px;height:8px;border-radius:4px;background:#22c55e"></div></div><div class="t" style="left:288px;top:280px;font-size:15.6px;color:#22c55e;transform:translateX(-100%);">2</div><div class="a" style="left:18px;top:316.5px;width:270px;height:1px;background:#f0f1f3"></div><svg class="a" style="left:17.25px;top:332.25px;" width="18.5" height="18.5" viewBox="0 0 24 24" fill="none" stroke="#a855f7" stroke-width="2" stroke-linecap="round" stroke-linejoin="round"><polyline points="22 7 13.5 15.5 8.5 10.5 2 17"/><polyline points="16 7 22 7 22 13"/></svg><div class="t" style="left:44.5px;top:334px;font-size:15.6px;color:#374151;">Conversion Metrics</div><div class="a" style="left:18px;top:362px;width:130.7px;height:97px;background:#f9fafb;border-radius:8px"></div><div class="a" style="left:158.3px;top:362px;width:129.7px;height:97px;background:#f9fafb;border-radius:8px"></div><div class="t" style="left:27px;top:374px;font-size:15.6px;color:#6b7280;">Conversion</div><div class="t" style="left:27px;top:396px;font-size:15.6px;color:#6b7280;">Rate</div><div class="t" style="left:27px;top:421px;font-size:22px;color:#111827;">0%</div><div class="t" style="left:166.3px;top:374px;font-size:15.6px;color:#6b7280;">Avg. Response</div><div class="t" style="left:166.3px;top:396px;font-size:15.6px;color:#6b7280;">Time</div><div class="t" style="left:166.3px;top:421px;font-size:22px;color:#111827;">N/A</div></section>
<section class="card" style="left:1290px;top:179px;width:306px;height:563px"><div class="t" style="left:18.3px;top:22px;font-size:15.55px;color:#374151;">Team Performance</div><div class="t" style="left:17.5px;top:47px;font-size:37px;color:#1e293b;">0%</div><div class="t" style="left:73px;top:67px;font-size:13px;color:#22c55e;letter-spacing:0.2px;">+0%</div><svg class="a" style="left:221.7px;top:29.5px;" width="16" height="16" viewBox="0 0 24 24" fill="none" stroke="#374151" stroke-width="2" stroke-linecap="round" stroke-linejoin="round"><path d="M3 12a9 9 0 0 1 9-9 9.75 9.75 0 0 1 6.74 2.74L21 8"/><path d="M21 3v5h-5"/><path d="M21 12a9 9 0 0 1-9 9 9.75 9.75 0 0 1-6.74-2.74L3 16"/><path d="M8 16H3v5"/></svg><div class="a" style="left:248px;top:18px;width:40px;height:38.5px;background:#eef2ff;border-radius:8px"></div><svg class="a" style="left:257.3px;top:26.7px;" width="21.4" height="21.4" viewBox="0 0 24 24" fill="none" stroke="#4f46e5" stroke-width="2" stroke-linecap="round" stroke-linejoin="round"><path d="M16 21v-2a4 4 0 0 0-4-4H6a4 4 0 0 0-4 4v2"/><circle cx="9" cy="7" r="4"/><path d="M22 21v-2a4 4 0 0 0-3-3.87"/><path d="M16 3.13a4 4 0 0 1 0 7.75"/></svg><div class="a" style="left:18px;top:101px;width:127.5px;height:97.3px;background:#f9fafb;border-radius:8px"></div><div class="a" style="left:160px;top:101px;width:128px;height:97.3px;background:#f9fafb;border-radius:8px"></div><svg class="a" style="left:26.95px;top:112.75px;" width="15.7" height="15.7" viewBox="0 0 24 24" fill="none" stroke="#22c55e" stroke-width="2" stroke-linecap="round" stroke-linejoin="round"><path d="M22 11.08V12a10 10 0 1 1-5.93-9.14"/><polyline points="22 4 12 14.01 9 11.01"/></svg><div class="t" style="left:49px;top:115px;font-size:13.85px;color:#374151;">Tasks</div><div class="t" style="left:27px;top:139px;font-size:15px;color:#111827;">0/0</div><div class="t" style="left:48.5px;top:141px;font-size:13px;color:#6b7280;letter-spacing:0.48px;">NaN%</div><div class="t" style="left:49px;top:163px;font-size:13.7px;color:#6b7280;">Complete</div><div class="a" style="left:27px;top:185.2px;width:111px;height:4.5px;background:#3b82f6;border-radius:3px"></div><svg class="a" style="left:168.2px;top:112.6px;" width="16" height="16" viewBox="0 0 24 24" fill="none" stroke="#3b82f6" stroke-width="2" stroke-linecap="round" stroke-linejoin="round"><circle cx="12" cy="12" r="10"/><polyline points="12 6 12 12 16 14"/></svg><div class="t" style="left:190.2px;top:114px;font-size:14px;color:#374151;letter-spacing:0.08px;">Activities</div><div class="t" style="left:168.5px;top:139px;font-size:15px;color:#111827;">0</div><div class="t" style="left:199.8px;top:139px;font-size:15px;color:#111827;">0</div><div class="t" style="left:242px;top:139px;font-size:15px;color:#111827;">0</div><div class="t" style="left:168.5px;top:161px;font-size:14px;color:#6b7280;display:flex;"><span>Calls</span><span>Emails</span><span>Meetings</span></div><svg class="a" style="left:17.8px;top:214.7px;" width="15" height="15" viewBox="0 0 24 24" fill="none" stroke="#f59e0b" stroke-width="2" stroke-linecap="round" stroke-linejoin="round"><polygon points="12 2 15.09 8.26 22 9.27 17 14.14 18.18 21.02 12 17.77 5.82 21.02 7 14.14 2 9.27 8.91 8.26 12 2"/></svg><div class="t" style="left:40px;top:216px;font-size:14px;color:#374151;letter-spacing:0.02px;">Top Performer</div><div class="a" style="left:18px;top:244.7px;width:35px;height:35.1px;border-radius:50%;background:linear-gradient(135deg,#45bccd 0%,#3b82f6 100%)"></div><div class="t" style="left:35.5px;top:255px;font-size:14px;color:#fff;font-weight:700;transform:translateX(-50%);">H</div><div class="t" style="left:62.3px;top:243px;font-size:15.5px;color:#111827;">Hamna</div><div class="t" style="left:62.3px;top:266px;font-size:13.85px;color:#22c55e;">+0%</div><div class="t" style="left:94px;top:268px;font-size:10px;color:#c5c9d0;">|</div><div class="t" style="left:100.2px;top:266px;font-size:13.85px;color:#6b7280;">0 Tasks</div><div class="t" style="left:18px;top:306px;font-size:13px;color:#374151;letter-spacing:0.5px;">Team Workload</div><div class="a" style="left:214.8px;top:298.1px;width:28.7px;height:28.7px;background:#3b82f6;border-radius:50%;border:1.200px solid #fff"></div><div class="t" style="left:229.2px;top:306px;font-size:13px;color:#fff;transform:translateX(-50%);-webkit-text-stroke:0.3px #fff;">H</div><div class="a" style="left:236.8px;top:298.1px;width:28.7px;height:28.7px;background:#3b82f6;border-radius:50%;border:1.200px solid #fff"></div><div class="t" style="left:251.2px;top:306px;font-size:13px;color:#fff;transform:translateX(-50%);-webkit-text-stroke:0.3px #fff;">S</div><div class="a" style="left:258.8px;top:298.1px;width:28.7px;height:28.7px;background:#3b82f6;border-radius:50%;border:1.200px solid #fff"></div><div class="t" style="left:273.2px;top:306px;font-size:13px;color:#fff;transform:translateX(-50%);-webkit-text-stroke:0.3px #fff;">N</div><div class="t" style="left:18px;top:338px;font-size:13px;color:#374151;letter-spacing:0.36px;">Hamna</div><div class="a" style="left:77.8px;top:342px;width:203.5px;height:7px;background:#f1f2f4;border-radius:4px"><div class="a" style="left:0;top:0;width:122.0px;height:7px;border-radius:4px;background:#f59e0b"></div></div><div class="t" style="left:18px;top:365px;font-size:13px;color:#374151;letter-spacing:0.36px;">Sabith</div><div class="a" style="left:77.8px;top:368px;width:203.5px;height:7px;background:#f1f2f4;border-radius:4px"><div class="a" style="left:0;top:0;width:106.2px;height:7px;border-radius:4px;background:#f59e0b"></div></div><div class="t" style="left:18px;top:391px;font-size:13px;color:#374151;letter-spacing:0.36px;">Noufal</div><div class="a" style="left:77.8px;top:395px;width:203.5px;height:6px;background:#f1f2f4;border-radius:4px"><div class="a" style="left:0;top:0;width:92.8px;height:6px;border-radius:4px;background:#22c55e"></div></div><div class="a" style="left:18px;top:422px;width:270px;height:1px;background:#f0f1f3"></div><div class="t" style="left:18px;top:436px;font-size:13px;color:#374151;letter-spacing:0.5px;">Upcoming</div><div class="a" style="left:135.2px;top:432px;width:75.6px;height:21.6px;background:#e5e7eb;border-radius:11px"></div><div class="t" style="left:173px;top:438px;font-size:11px;color:#4b5563;transform:translateX(-50%);">0 Deadlines</div><div class="a" style="left:220px;top:432px;width:67.5px;height:21.6px;background:#e8f0fe;border-radius:11px"></div><div class="t" style="left:254px;top:438px;font-size:11px;color:#2563eb;transform:translateX(-50%);">0 Reviews</div></section>
<div class="a" style="left:26px;top:773px;width:4.2px;height:35px;background:#47b8c9;border-radius:2px"></div>
<h2 class="t" style="left:44px;top:765px;font-size:26px;color:#111827;font-weight:700;letter-spacing:0.5px;">TC Sales Performance</h2>
<div class="t" style="left:44px;top:802px;font-size:15.5px;color:#4b5563;letter-spacing:0.42px;">Track booking conversions and revenue by Travel Consultant</div>
<div class="a" style="left:1219px;top:770px;width:163.7px;height:40.7px;border:1px solid #d1d5db;border-radius:8px;background:#fff"></div>
<div class="t" style="left:1243px;top:782px;font-size:17px;color:#1f2937;letter-spacing:-0.25px;">This Month</div>
<svg class="a" style="left:1366.5px;top:784.5px;" width="13" height="13" viewBox="0 0 24 24" fill="none" stroke="#1f2937" stroke-width="3" stroke-linecap="round" stroke-linejoin="round"><path d="m6 9 6 6 6-6"/></svg>
<button class="a" style="left:1396.4px;top:770px;width:40.2px;height:40.7px;border:1px solid #d1d5db;border-radius:8px;background:#fff"></button>
<svg class="a" style="left:1406px;top:779.8px;" width="21" height="21" viewBox="0 0 24 24" fill="none" stroke="#374151" stroke-width="2" stroke-linecap="round" stroke-linejoin="round"><path d="M3 12a9 9 0 0 1 9-9 9.75 9.75 0 0 1 6.74 2.74L21 8"/><path d="M21 3v5h-5"/><path d="M21 12a9 9 0 0 1-9 9 9.75 9.75 0 0 1-6.74-2.74L3 16"/><path d="M8 16H3v5"/></svg>
<button class="a" style="left:1451px;top:771px;width:146px;height:39px;background:#47b8c9;border-radius:8px;box-shadow:0 1px 2px rgba(0,0,0,.08)"></button>
<svg class="a" style="left:1468px;top:782px;" width="17" height="17" viewBox="0 0 24 24" fill="none" stroke="#fff" stroke-width="2" stroke-linecap="round" stroke-linejoin="round"><path d="M21 15v4a2 2 0 0 1-2 2H5a2 2 0 0 1-2-2v-4"/><polyline points="7 10 12 15 17 10"/><line x1="12" x2="12" y1="15" y2="3"/></svg>
<div class="t" style="left:1495px;top:783px;font-size:16px;color:#fff;font-weight:700;letter-spacing:-0.42px;">Export CSV</div>
<section class="a" style="left:26px;top:839.4px;width:518px;height:105.4px;background:linear-gradient(135deg,#eef5ff 0%,#e0ecfe 100%);border:1px solid #bfdbfe;border-radius:7px"><div class="a" style="left:10.7px;top:10.6px;width:24.5px;height:24px;background:#3b82f6;border-radius:4px"></div><svg class="a" style="left:15.05px;top:15.05px;" width="15.5" height="15.5" viewBox="0 0 24 24" fill="none" stroke="#fff" stroke-width="2" stroke-linecap="round" stroke-linejoin="round"><rect width="18" height="18" x="3" y="4" rx="2" ry="2"/><line x1="16" x2="16" y1="2" y2="6"/><line x1="8" x2="8" y1="2" y2="6"/><line x1="3" x2="21" y1="10" y2="10"/></svg><div class="a" style="left:418.7px;top:12.6px;width:86.3px;height:19px;background:#c3dbfd;border-radius:10px"></div><div class="t" style="left:461.91px;top:17.6px;font-size:10px;color:#1d4ed8;font-weight:700;letter-spacing:-0.17px;transform:translateX(-50%);">CONVERSIONS</div><div class="t" style="left:11px;top:44.6px;font-size:25px;color:#1e3a8a;font-weight:700;">0</div><div class="t" style="left:35px;top:52.6px;font-size:14px;color:#2f5fe0;letter-spacing:-0.04px;">Bookings</div><div class="t" style="left:11px;top:78.6px;font-size:12px;color:#1d4ed8;letter-spacing:-0.17px;">0 Leads</div><div class="t" style="left:65.8px;top:78.6px;font-size:12px;color:#1d4ed8;letter-spacing:-0.17px;">0 Pax</div></section>
<section class="a" style="left:552px;top:839.4px;width:518px;height:105.4px;background:linear-gradient(135deg,#f0fdf4 0%,#dcfce7 100%);border:1px solid #bbf7d0;border-radius:7px"><div class="a" style="left:11px;top:10.6px;width:25px;height:24px;background:#22c55e;border-radius:4px"></div><div class="t" style="left:23.5px;top:14.6px;font-size:17.5px;color:#fff;transform:translateX(-50%);">₹</div><div class="a" style="left:444.8px;top:12.6px;width:60.2px;height:19px;background:#bbf7d0;border-radius:10px"></div><div class="t" style="left:474.85px;top:17.6px;font-size:10px;color:#166534;font-weight:700;letter-spacing:-0.3px;transform:translateX(-50%);">REVENUE</div><div class="t" style="left:11.5px;top:45.6px;font-size:24px;color:#111827;font-weight:700;">₹0</div><div class="t" style="left:11.8px;top:78.6px;font-size:12px;color:#166534;letter-spacing:-0.16px;">Avg: ₹0 per booking</div></section>
<section class="a" style="left:1079px;top:839.4px;width:518px;height:105.4px;background:linear-gradient(135deg,#fffbeb 0%,#fef3c7 100%);border:1px solid #fde68a;border-radius:7px"><div class="a" style="left:11px;top:10.6px;width:24.5px;height:24px;background:#f59e0b;border-radius:4px"></div><svg class="a" style="left:15.7px;top:15.3px;" width="15" height="15" viewBox="0 0 24 24" fill="none" stroke="#fff" stroke-width="2" stroke-linecap="round" stroke-linejoin="round"><circle cx="12" cy="8" r="6"/><path d="M15.477 12.89 17 22l-5-3-5 3 1.523-9.11"/></svg><div class="a" style="left:454.8px;top:12.6px;width:50.4px;height:19px;background:#fde68a;border-radius:10px"></div><div class="t" style="left:479.97px;top:17.6px;font-size:10px;color:#92400e;font-weight:700;letter-spacing:-0.05px;transform:translateX(-50%);">TOP TC</div><div class="t" style="left:11px;top:44.6px;font-size:16px;color:#7a3d14;font-weight:700;">sheha</div><div class="t" style="left:11px;top:70.6px;font-size:11px;color:#b45309;">₹0</div></section>
<section class="a" style="left:26px;top:963px;width:1571px;height:140px;background:#fff;border:1px solid #e5e7eb;border-radius:12px;overflow:hidden"><div class="a" style="left:0px;top:0px;width:1569px;height:58px;background:linear-gradient(90deg,#f9fafb,#f3f4f6);border-bottom:1px solid #e5e7eb"></div><div class="t" style="left:22.7px;top:21px;font-size:16px;color:#1f2937;font-weight:700;letter-spacing:0.32px;">TRAVEL CONSULTANT</div><div class="t" style="left:336.6px;top:21px;font-size:16px;color:#1f2937;font-weight:700;letter-spacing:0.32px;">TRIPS / PAX</div><div class="t" style="left:499.4px;top:21px;font-size:16px;color:#1f2937;font-weight:700;letter-spacing:0.35px;">DESTINATION</div><div class="t" style="left:726px;top:21px;font-size:16px;color:#1f2937;font-weight:700;letter-spacing:0.06px;">TRAVEL DATE</div><div class="t" style="left:958px;top:21px;font-size:16px;color:#1f2937;font-weight:700;letter-spacing:0.11px;">BOOKING VALUE</div><div class="t" style="left:1204.5px;top:21px;font-size:16px;color:#1f2937;font-weight:700;letter-spacing:0.28px;">ADVANCE / BALANCE</div><div class="t" style="left:1451.4px;top:21px;font-size:16px;color:#1f2937;font-weight:700;letter-spacing:0.03px;">DETAILS</div><div class="a" style="left:22px;top:76px;width:48px;height:48px;border-radius:50%;border:2px solid #e1e4ea;background:#fff"></div><svg class="a" style="left:27px;top:80.8px" width="38" height="38" viewBox="0 0 38 38"><defs><clipPath id="av"><circle cx="19" cy="19" r="19"/></clipPath></defs><g clip-path="url(#av)"><rect width="38" height="38" fill="#fcc02b"/><path d="M3 40c0-8 3-12 8-13.500l5-1.500h6l5 1.500c5 1.500 8 5.500 8 13.500z" fill="#e7b676"/><path d="M15.500 22h7v4.500l-3.500 2.500-3.500-2.500z" fill="#8f6263"/><ellipse cx="19.200" cy="12.800" rx="7.400" ry="6.600" fill="#1b2030"/><ellipse cx="18.800" cy="17.800" rx="4.900" ry="6.300" fill="#a07270"/><path d="M13.800 15.500c1-4 4.500-5.500 7.500-4.500 2 .700 3.200 2.500 3.400 5.500-1.500-2.200-3.500-3.300-6-3.300-2 0-3.700.8-4.900 2.300z" fill="#1b2030"/><circle cx="11" cy="32" r=".8" fill="#9a6d4a"/><circle cx="15" cy="35" r=".8" fill="#9a6d4a"/><circle cx="24" cy="33" r=".8" fill="#9a6d4a"/><circle cx="28" cy="36" r=".8" fill="#9a6d4a"/><circle cx="20" cy="31" r=".7" fill="#b9c4d2"/></g></svg><div class="t" style="left:88.5px;top:82px;font-size:18px;color:#111827;font-weight:700;letter-spacing:-0.17px;">Anagha</div><div class="t" style="left:88.5px;top:106px;font-size:13px;color:#6b7280;">Avg: ₹0</div><div class="a" style="left:341px;top:84.2px;width:31.5px;height:31.5px;background:#dbeafe;border-radius:50%"></div><div class="t" style="left:356.8px;top:93px;font-size:15px;color:#1e3a8a;font-weight:700;transform:translateX(-50%);">0</div><div class="t" style="left:385px;top:90px;font-size:20px;color:#9ca3af;transform:translateX(-50%);">/</div><div class="a" style="left:397.3px;top:84.2px;width:31.5px;height:31.5px;background:#f3e8ff;border-radius:50%"></div><div class="t" style="left:413px;top:93px;font-size:15px;color:#6b21a8;font-weight:700;transform:translateX(-50%);">0</div><div class="t" style="left:499.4px;top:93px;font-size:14px;color:#9ca3af;letter-spacing:0.1px;">No bookings</div><div class="t" style="left:780px;top:92px;font-size:14px;color:#9ca3af;transform:translateX(-50%);">-</div><div class="t" style="left:1094.5px;top:91px;font-size:18px;color:#111827;font-weight:700;transform:translateX(-100%);">₹0</div><div class="t" style="left:1379.5px;top:81px;font-size:15px;color:#16a34a;font-weight:700;transform:translateX(-100%);">₹0</div><div class="t" style="left:1379.5px;top:103px;font-size:15px;color:#ea580c;font-weight:700;transform:translateX(-100%);">₹0</div><svg class="a" style="left:1457.8px;top:92px;" width="15" height="15" viewBox="0 0 24 24" fill="none" stroke="#1e9fb8" stroke-width="2" stroke-linecap="round" stroke-linejoin="round"><path d="m6 9 6 6 6-6"/></svg><div class="t" style="left:1478.7px;top:92px;font-size:16px;color:#1e9fb8;">View</div></section>
</main>
<div class="a" style="left:1905px;top:0;width:15px;height:1080px;background:#fcfcfc"><div class="a" style="left:3px;top:18px;width:9px;height:333.500px;border-radius:4.500px;background:#8b8b8b"></div><svg class="a" style="left:0;top:0" width="15" height="1080" viewBox="0 0 15 1080"><path d="M4 11 7.500 6l3.500 5z" fill="#8b8b8b" stroke="#8b8b8b" stroke-width="1.600" stroke-linejoin="round"/><path d="M4 1070 7.500 1075l3.500-5z" fill="#8b8b8b" stroke="#8b8b8b" stroke-width="1.600" stroke-linejoin="round"/></svg></div>
</div></body></html>
